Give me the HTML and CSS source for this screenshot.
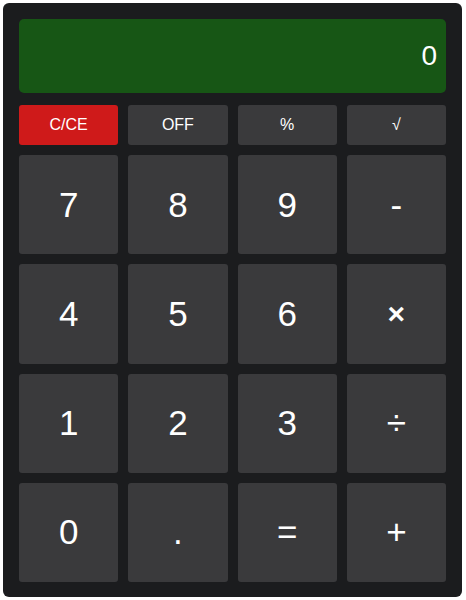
FILE: index.html
```html
<!DOCTYPE html>
<html>
<head>
<meta charset="utf-8">
<link rel="stylesheet" href="styles.css">
</head>
<body>
<div class="calc">
  <div class="display">0</div>
  <div class="funcs">
    <button class="btn small red">C/CE</button>
    <button class="btn small">OFF</button>
    <button class="btn small">%</button>
    <button class="btn small">√</button>
  </div>
  <div class="keys">
    <button class="btn key">7</button>
    <button class="btn key">8</button>
    <button class="btn key">9</button>
    <button class="btn key">-</button>
    <button class="btn key">4</button>
    <button class="btn key">5</button>
    <button class="btn key">6</button>
    <button class="btn key op">×</button>
    <button class="btn key">1</button>
    <button class="btn key">2</button>
    <button class="btn key">3</button>
    <button class="btn key">÷</button>
    <button class="btn key">0</button>
    <button class="btn key">.</button>
    <button class="btn key">=</button>
    <button class="btn key">+</button>
  </div>
</div>
</body>
</html>
```
FILE: styles.css
```css
html, body {
  margin: 0;
  padding: 0;
  background: #ffffff;
}
body {
  font-family: "Liberation Sans", Arial, sans-serif;
}
.calc {
  margin: 3px;
  width: 459px;
  height: 594px;
  box-sizing: border-box;
  padding: 16px 16px 15px 16px;
  background: #1b1c1e;
  border-radius: 6px;
}
.display {
  height: 74px;
  box-sizing: border-box;
  background: #175615;
  border-radius: 5px;
  color: #ffffff;
  font-size: 28px;
  display: flex;
  align-items: center;
  justify-content: flex-end;
  padding-right: 9px;
  margin-bottom: 12px;
}
.funcs {
  display: grid;
  grid-template-columns: repeat(4, 1fr);
  gap: 10px;
  margin-bottom: 10px;
}
.keys {
  display: grid;
  grid-template-columns: repeat(4, 1fr);
  grid-auto-rows: 99.25px;
  gap: 10px;
}
.btn {
  border: none;
  margin: 0;
  padding: 0;
  background: #3a3a3c;
  color: #ffffff;
  border-radius: 3px;
  font-family: "Liberation Sans", Arial, sans-serif;
}
.small {
  height: 40px;
  font-size: 16px;
}
.red {
  background: #cf1a1a;
}
.key {
  font-size: 35px;
}
.op {
  font-weight: bold;
  font-size: 30px;
}
```
